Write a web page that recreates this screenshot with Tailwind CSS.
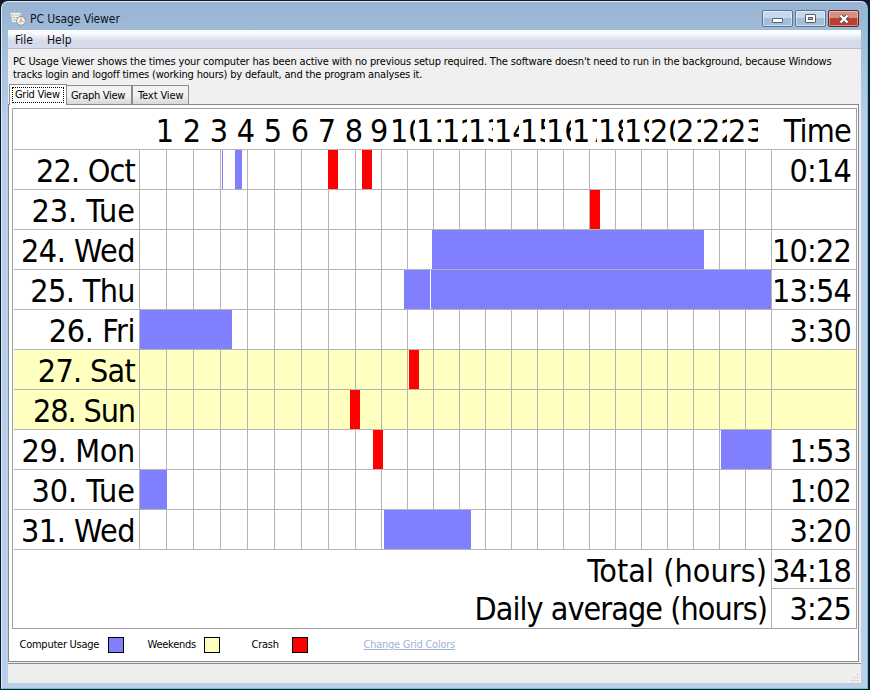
<!DOCTYPE html>
<html lang="en">
<head>
    <meta charset="UTF-8">
    <meta name="viewport" content="width=device-width, initial-scale=1.0">
    <title>PC Usage Viewer</title>
    <script src="https://cdn.jsdelivr.net/npm/@tailwindcss/browser@4"></script>
</head>
<body class="bg-[#10182c] overflow-hidden font-['DejaVu_Sans_Condensed','DejaVu_Sans',sans-serif] font-stretch-condensed text-[11px] text-black">

    <!-- Window frame -->
    <div class="w-[867px] h-[688px] ml-px mt-px rounded-t-[7px] border border-[#5fc6dc] border-t-[#e4eef8] border-l-[#dce8f6] bg-linear-to-b from-[#98b4d2] to-[#b9cfea] to-[120px] flex flex-col px-[6px] pb-[5px]">

        <!-- Title bar -->
        <header class="h-[28px] shrink-0 flex items-start justify-between">
            <div class="flex items-center pt-[8px] pl-[2px]">
                <svg class="w-[16px] h-[16px]" viewBox="0 0 16 16">
                    <path d="M.5 1.500h10.500v10h-9z" fill="#f4f4f2" stroke="#b4bcc2" />
                    <path d="M2 4h2M5 4h2M8 4h2M2.500 6.500h2M5.500 6.500h2M3 9h3" stroke="#a5abb2" />
                    <circle cx="11" cy="9.800" r="4.400" fill="#f6f3f0" stroke="#8e8e92" />
                    <path d="M11 6.500v3.300l2.500 1M11 9.800l-2 1.700" fill="none" stroke="#c27a70" stroke-width=".9" />
                </svg>
                <span class="ml-[4px] pt-px whitespace-nowrap text-[12px] leading-[16px] tracking-[-0.1px] text-[#0b1322]">PC Usage Viewer</span>
            </div>
            <div class="flex gap-[2px] pt-[8px] pr-[2px]">
                <div class="w-[31px] h-[17px] rounded-[2px] border border-[#5b7594] ring-1 ring-inset ring-white/50 bg-linear-to-b from-[#c6d8eb] from-50% to-[#a3bcd8] to-50% flex justify-center pt-[7px]">
                    <div class="w-[11px] h-[5px] border border-[#566070] bg-white rounded-[1px]"></div>
                </div>
                <div class="w-[31px] h-[17px] rounded-[2px] border border-[#5b7594] ring-1 ring-inset ring-white/50 bg-linear-to-b from-[#c6d8eb] from-50% to-[#a3bcd8] to-50% flex justify-center pt-[3px]">
                    <div class="w-[11px] h-[9px] border border-[#566070] bg-white rounded-[1px] p-[2px]">
                        <div class="w-[5px] h-[3px] border border-[#566070] bg-[#a3bcd8]"></div>
                    </div>
                </div>
                <div class="w-[31px] h-[17px] rounded-[2px] border border-[#5c2a2a] ring-1 ring-inset ring-white/40 bg-linear-to-b from-[#d98f80] from-50% to-[#bb4230] to-50% flex justify-center items-center">
                    <svg class="w-[12px] h-[10px]" viewBox="0 0 12 10">
                        <path d="M2.500 1.500l7 7M9.500 1.500l-7 7" stroke="#5a4a54" stroke-width="4" />
                        <path d="M2.500 1.500l7 7M9.500 1.500l-7 7" stroke="#fff" stroke-width="2.300" />
                    </svg>
                </div>
            </div>
        </header>

        <!-- Client area -->
        <main class="flex-1 flex flex-col bg-[#f0f0f0]">
            <nav class="h-[19px] shrink-0 flex items-center border-b border-[#b8bccb] bg-linear-to-b from-[#fbfcfe] from-20% to-[#d5dbed] to-60% text-[12px] pt-[2px] pl-[7px] text-[#101018]">
                <span class="w-[32px]">File</span>
                <span>Help</span>
            </nav>

            <p class="h-[35px] shrink-0 pt-[6px] pl-[5px] leading-[13px] whitespace-nowrap">
                <span class="tracking-[-0.162px]">PC Usage Viewer shows the times your computer has been active with no previous setup required. The software doesn't need to run in the background, because Windows</span><br>
                <span class="tracking-[-0.18px]">tracks login and logoff times (working hours) by default, and the program analyses it.</span>
            </p>

            <!-- Tabs -->
            <div class="h-[21px] shrink-0 flex items-end whitespace-nowrap pl-px relative z-10 -mb-px">
                <div class="w-[58px] h-[21px] border border-b-0 border-[#898c95] bg-white p-[2px]">
                    <div class="h-[16px] border border-dotted border-black leading-[14px] pl-[2px] tracking-[-0.3px]">Grid View</div>
                </div>
                <div class="w-[65px] h-[19px] mb-px border border-l-0 border-b-0 border-[#898c95] bg-linear-to-b from-[#f2f2f2] from-50% to-[#d8d8d8] pl-[4px] leading-[20px] tracking-[-0.3px]">Graph View</div>
                <div class="w-[57px] h-[19px] mb-px border border-b-0 border-[#898c95] bg-linear-to-b from-[#f2f2f2] from-50% to-[#d8d8d8] pl-[5px] leading-[20px] tracking-[-0.1px]">Text View</div>
            </div>

            <!-- Tab page -->
            <section class="w-[851px] h-[558px] shrink-0 border border-[#84888f] bg-white px-[3px] pt-[3px]">
                <div class="w-[845px] h-[521px] border border-[#a0a0a0] pl-px text-[32px] tracking-[-0.8px] leading-[42px] whitespace-nowrap">
                    <div class="h-[40px] flex leading-[44px]">
                        <div id="hours" class="w-[745px] pl-[138px] flex"></div>
                        <div class="w-[92px] text-right">Time</div>
                    </div>
                    <div id="days"></div>
                    <div class="h-[40px] flex border-t border-[#b4b4b4]">
                        <div class="w-[757px] pr-[4px] text-right tracking-[0.05px]">Total (hours)</div>
                        <div class="w-[84px] h-[39px] border-l border-b border-[#b4b4b4] pr-[4px] flex justify-end">34:18</div>
                    </div>
                    <div class="h-[39px] flex leading-[41px]">
                        <div class="w-[757px] pr-[4px] text-right tracking-[-0.95px]">Daily average (hours)</div>
                        <div class="w-[84px] border-l border-[#b4b4b4] pr-[4px] text-right">3:25</div>
                    </div>
                </div>

                <!-- Legend -->
                <div class="h-[32px] flex items-center pl-[7px] whitespace-nowrap tracking-[-0.25px]">
                    <div class="w-[89px] pt-px pl-[0.5px]">Computer Usage</div>
                    <div class="size-[16px] border border-black bg-[#8080ff]"></div>
                    <div class="w-[57px] pt-px ml-[23px] pl-[0.5px]">Weekends</div>
                    <div class="size-[16px] border border-black bg-[#ffffc0]"></div>
                    <div class="w-[41px] pt-px ml-[31px] pl-[0.5px]">Crash</div>
                    <div class="size-[16px] border border-black bg-[#ff0000]"></div>
                    <a class="ml-[55.5px] text-[#9fb4d3] underline">Change Grid Colors</a>
                </div>
            </section>

            <!-- Status bar -->
            <footer class="h-[20px] shrink-0 mt-px border-t border-[#8c8c8c] bg-[#f0eded] flex justify-end items-end p-[2px] pb-[1px]">
                <svg class="w-[9px] h-[9px]" viewBox="0 0 9 9" fill="#b4b0b0">
                    <path d="M7 1h1v1h-1zM4 4h1v1h-1zM7 4h1v1h-1zM1 7h1v1h-1zM4 7h1v1h-1zM7 7h1v1h-1z" />
                </svg>
            </footer>
        </main>
    </div>

    <script>
        // bars: [left, width, crash?] in pixels from the first grid line
        const days = [
            { name: '22. Oct', time: '0:14', spacing: 'tracking-[-0.8px]', bars: [[82, 1], [95, 7], [188, 10, true], [222, 10, true]] },
            { name: '23. Tue', time: '', spacing: 'tracking-[0px]', bars: [[450, 10, true]] },
            { name: '24. Wed', time: '10:22', spacing: 'tracking-[-0.5px]', bars: [[292, 272]] },
            { name: '25. Thu', time: '13:54', spacing: 'tracking-[-0.6px]', bars: [[264, 26], [291, 340]] },
            { name: '26. Fri', time: '3:30', spacing: 'tracking-[-0.4px]', bars: [[0, 92]] },
            { name: '27. Sat', time: '', weekend: true, spacing: 'tracking-[-0.7px]', bars: [[269, 10, true]] },
            { name: '28. Sun', time: '', weekend: true, spacing: 'tracking-[-1.1px]', bars: [[210, 10, true]] },
            { name: '29. Mon', time: '1:53', spacing: 'tracking-[-0.3px]', bars: [[233, 10, true], [581, 50]] },
            { name: '30. Tue', time: '1:02', spacing: 'tracking-[0px]', bars: [[0, 27]] },
            { name: '31. Wed', time: '3:20', spacing: 'tracking-[-0.5px]', bars: [[244, 87]] },
        ];

        // Hour captions, two digit ones get cut off by the next caption
        let hours = '';
        for (let h = 1; h <= 23; h++) {
            const cell = h < 9 ? 'w-[27px] -ml-px mr-px text-center' : h === 9 ? 'w-[21px] pl-[2px]' : h === 23 ? 'w-[31px] pl-px tracking-[-0.4px]' : 'w-[26px] pl-px tracking-[0px]';
            hours += `<div class="${cell} shrink-0 overflow-hidden h-[40px]">${h}</div>`;
        }
        document.getElementById('hours').innerHTML = hours;

        // First eight hours are one pixel wider
        let cells = '';
        for (let h = 0; h < 24; h++) {
            cells += `<div class="${h < 8 ? 'w-[27px]' : 'w-[26px]'} h-full shrink-0 border-r border-[#b4b4b4]"></div>`;
        }

        document.getElementById('days').innerHTML = days.map(day => `
            <div class="h-[40px] flex border-t border-[#b4b4b4] ${day.weekend ? 'bg-[#ffffc0]' : ''}">
                <div class="w-[126px] pr-[4px] border-r border-[#b4b4b4] text-right ${day.spacing}">${day.name}</div>
                <div class="relative w-[632px] flex">
                    ${cells}
                    ${day.bars.map(bar => `<div class="absolute top-0 h-full ${bar[2] ? 'bg-[#ff0000]' : 'bg-[#8080ff]'}" style="left:${bar[0]}px;width:${bar[1]}px"></div>`).join('')}
                </div>
                <div class="w-[83px] pr-[4px] flex justify-end">${day.time}</div>
            </div>`).join('');
    </script>
</body>
</html>
